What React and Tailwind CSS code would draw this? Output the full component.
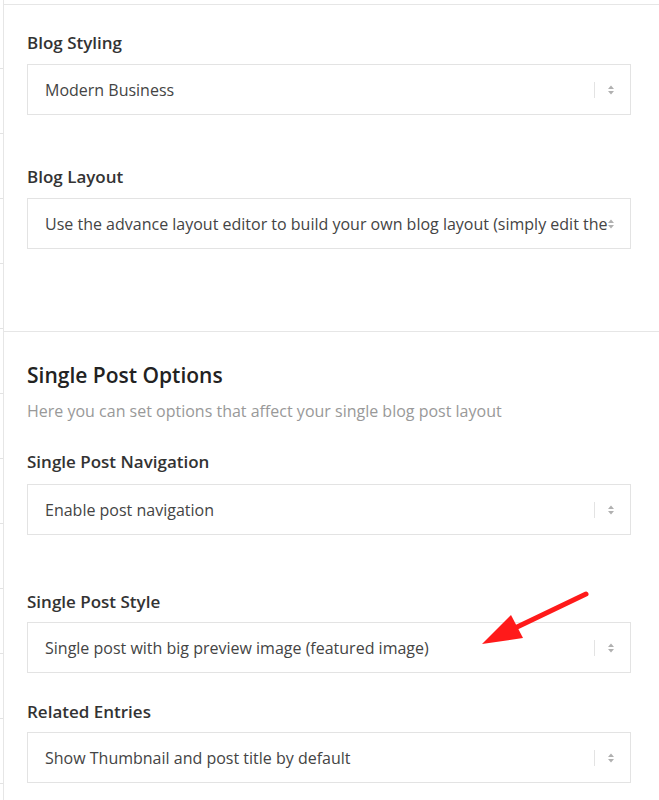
import React from "react";

function Arrows() {
  return (
    <svg width="8" height="12" viewBox="0 0 8 12" className="block">
      <path d="M4 1.5 L7 5 L1 5 Z" fill="#b0b0b0" />
      <path d="M4 10.5 L7 7 L1 7 Z" fill="#b0b0b0" />
    </svg>
  );
}

function Select({ text, overlay }) {
  return (
    <div className="relative h-[51px] border border-[#e3e3e3] bg-white flex items-center">
      <div className="ml-[17px] flex-1 whitespace-nowrap text-[16px] text-[#444] leading-6">{text}</div>
      {!overlay && <div className="w-px h-[16px] bg-[#e3e3e3] mr-[12px]" />}
      <div className={overlay ? "absolute right-[15px] top-[19px]" : "mr-[15px]"}>
        <Arrows />
      </div>
    </div>
  );
}

function Label({ children, className = "" }) {
  return (
    <div className={"text-[17px] font-semibold leading-6 text-[#333] " + className}>{children}</div>
  );
}

export default function App() {
  const ticks = Array.from({ length: 12 });
  return (
    <div className="relative w-[659px] h-[800px] bg-white overflow-hidden flex font-['Open_Sans',sans-serif]">
      <div className="w-[3px] flex flex-col pt-[68px] gap-[64px]">
        {ticks.map((_, i) => (
          <div key={i} className="h-px w-[3px] bg-[#e3e3e3]" />
        ))}
      </div>
      <div className="flex-1 border-l border-[#e6e6e6] flex flex-col">
        <div className="mt-[4px] border-t border-[#e6e6e6] h-[327px] pl-[23px] pr-[28px] pt-[26px]">
          <Label>Blog Styling</Label>
          <div className="mt-[9px]">
            <Select text="Modern Business" />
          </div>
          <Label className="mt-[50px]">Blog Layout</Label>
          <div className="mt-[9px]">
            <Select
              overlay
              text="Use the advance layout editor to build your own blog layout (simply edit the"
            />
          </div>
        </div>
        <div className="border-t border-[#e6e6e6] pl-[23px] pr-[28px] pt-[28px]">
          <div className="text-[21px] font-semibold leading-[30px] text-[#222]">Single Post Options</div>
          <div className="mt-[9px] text-[16px] leading-6 text-[#999]">
            Here you can set options that affect your single blog post layout
          </div>
          <Label className="mt-[27px]">Single Post Navigation</Label>
          <div className="mt-[10px]">
            <Select text="Enable post navigation" />
          </div>
          <Label className="mt-[55px]">Single Post Style</Label>
          <div className="mt-[8px]">
            <Select text="Single post with big preview image (featured image)" />
          </div>
          <Label className="mt-[27px]">Related Entries</Label>
          <div className="mt-[8px]">
            <Select text="Show Thumbnail and post title by default" />
          </div>
        </div>
      </div>
      <svg
        className="absolute left-0 top-0 pointer-events-none"
        width="659"
        height="800"
        viewBox="0 0 659 800"
      >
        <line x1="586" y1="594" x2="515" y2="628" stroke="#ff1a1a" strokeWidth="5" strokeLinecap="round" />
        <path d="M482 644 L511 615 L523 638 Z" fill="#ff1a1a" />
      </svg>
    </div>
  );
}
